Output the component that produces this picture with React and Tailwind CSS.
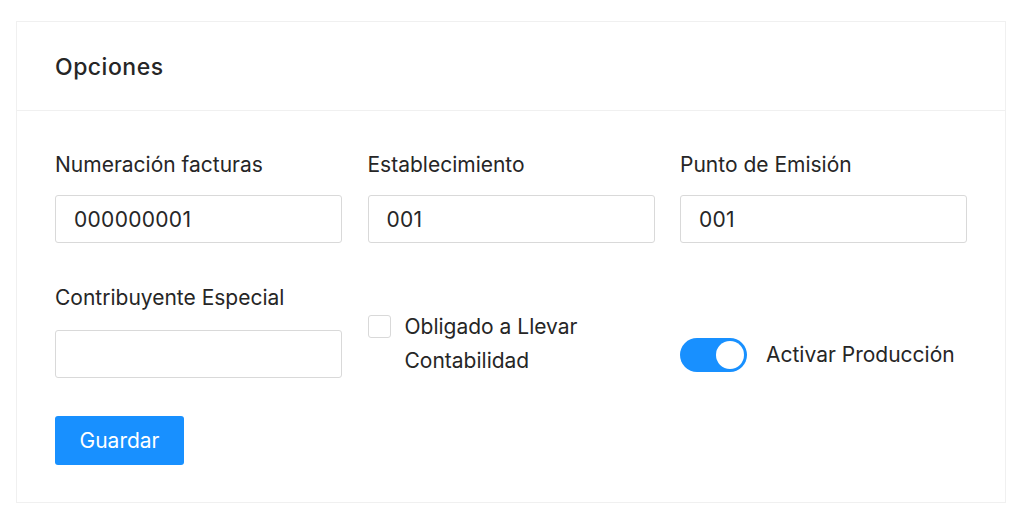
export default function App() {
  return (
    <div className="min-h-screen bg-white pt-[21px] pl-4 pr-[18px]" style={{ fontFamily: "Inter, 'Noto Sans', sans-serif" }}>
      <div className="border border-[#f0f0f0] bg-white text-[#262626]">
        {/* cabecera */}
        <div className="h-[89px] border-b border-[#f0f0f0] px-[38px] pt-[3px] flex items-center">
          <h2 className="text-[23px] font-medium tracking-[0.5px]">Opciones</h2>
        </div>

        <div className="px-[38px] pt-[39px] pb-[37px]">
          <div className="grid grid-cols-3 gap-x-[25.5px] gap-y-[40px]">
            <div>
              <label className="block text-[21px] leading-[30px] mb-[15px]">Numeración facturas</label>
              <input
                type="text"
                defaultValue="000000001"
                className="w-full h-[48px] border border-[#d9d9d9] rounded-[3px] px-[18px] text-[21px] tracking-[0.3px] outline-none"
              />
            </div>
            <div>
              <label className="block text-[21px] leading-[30px] mb-[15px]">Establecimiento</label>
              <input
                type="text"
                defaultValue="001"
                className="w-full h-[48px] border border-[#d9d9d9] rounded-[3px] px-[18px] text-[21px] tracking-[0.3px] outline-none"
              />
            </div>
            <div>
              <label className="block text-[21px] leading-[30px] mb-[15px]">Punto de Emisión</label>
              <input
                type="text"
                defaultValue="001"
                className="w-full h-[48px] border border-[#d9d9d9] rounded-[3px] px-[18px] text-[21px] tracking-[0.3px] outline-none"
              />
            </div>

            <div>
              <label className="block text-[21px] leading-[30px] mb-[17px]">Contribuyente Especial</label>
              <input
                type="text"
                className="w-full h-[48px] border border-[#d9d9d9] rounded-[3px] px-[18px] text-[21px] outline-none"
              />
            </div>
            <div className="pt-[27px] flex items-start gap-[14px]">
              <span className="mt-[5px] w-[23px] h-[23px] shrink-0 border border-[#d9d9d9] rounded-[3px] bg-white" />
              <span className="text-[21px] leading-[34px]">
                Obligado a Llevar
                <br />
                Contabilidad
              </span>
            </div>
            <div className="pt-[48px] flex items-center gap-[19px]">
              <span className="relative w-[67px] h-[34px] rounded-full bg-[#1890ff] shrink-0">
                <span className="absolute right-[3px] top-[3px] w-[28px] h-[28px] rounded-full bg-white" />
              </span>
              <span className="text-[21px] leading-[30px]">Activar Producción</span>
            </div>
          </div>

          <button className="mt-[38px] w-[129px] h-[49px] rounded-[3px] bg-[#1890ff] text-white text-[21px]">
            Guardar
          </button>
        </div>
      </div>
    </div>
  );
}
